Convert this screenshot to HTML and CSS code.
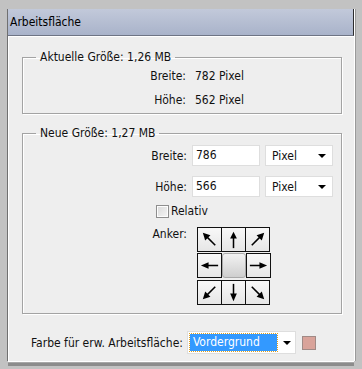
FILE: index.html
```html
<!DOCTYPE html>
<html lang="de">
<head>
<meta charset="utf-8">
<title>Arbeitsfläche</title>
<link rel="stylesheet" href="styles.css">
</head>
<body>
<div class="window">
  <div class="titlebar">Arbeitsfläche</div>
  <div class="content">
    <fieldset class="group group-current">
      <legend>Aktuelle Größe: 1,26 MB</legend>
      <div class="info-row"><span class="lbl">Breite:</span><span class="val">782 Pixel</span></div>
      <div class="info-row"><span class="lbl">Höhe:</span><span class="val">562 Pixel</span></div>
    </fieldset>

    <fieldset class="group group-new">
      <legend>Neue Größe: 1,27 MB</legend>
      <div class="field-row">
        <span class="lbl">Breite:</span>
        <span class="input">786</span>
        <span class="select"><span class="sel-text">Pixel</span><span class="tri"></span></span>
      </div>
      <div class="field-row">
        <span class="lbl">Höhe:</span>
        <span class="input">566</span>
        <span class="select"><span class="sel-text">Pixel</span><span class="tri"></span></span>
      </div>
      <div class="check-row">
        <span class="checkbox"></span><span class="check-label">Relativ</span>
      </div>
      <div class="anchor-row">
        <span class="lbl anchor-lbl">Anker:</span>
        <div class="anchor">
          <div class="arow">
            <span class="cell"><svg viewBox="0 0 24 24" width="24" height="24"><path d="M18 18 L9 9" stroke="#000" stroke-width="1.6"/><path d="M5 5 L13 7.5 L7.5 13 Z" fill="#000"/></svg></span>
            <span class="cell"><svg viewBox="0 0 24 24" width="24" height="24"><path d="M12 21 L12 9" stroke="#000" stroke-width="1.6"/><path d="M12 4 L15.5 11 L8.5 11 Z" fill="#000"/></svg></span>
            <span class="cell"><svg viewBox="0 0 24 24" width="24" height="24"><path d="M6 18 L15 9" stroke="#000" stroke-width="1.6"/><path d="M19 5 L16.5 13 L11 7.5 Z" fill="#000"/></svg></span>
          </div>
          <div class="arow arow-mid">
            <span class="cell"><svg viewBox="0 0 24 24" width="24" height="24"><path d="M21 12 L9 12" stroke="#000" stroke-width="1.6"/><path d="M3 12 L11 8.5 L11 15.5 Z" fill="#000"/></svg></span>
            <span class="cell center"></span>
            <span class="cell"><svg viewBox="0 0 24 24" width="24" height="24"><path d="M3 12 L15 12" stroke="#000" stroke-width="1.6"/><path d="M21 12 L13 8.5 L13 15.5 Z" fill="#000"/></svg></span>
          </div>
          <div class="arow arow-bot">
            <span class="cell"><svg viewBox="0 0 24 24" width="24" height="24"><path d="M18 6 L9 15" stroke="#000" stroke-width="1.6"/><path d="M5 19 L7.5 11 L13 16.5 Z" fill="#000"/></svg></span>
            <span class="cell"><svg viewBox="0 0 24 24" width="24" height="24"><path d="M12 3 L12 15" stroke="#000" stroke-width="1.6"/><path d="M12 21 L15.5 13 L8.5 13 Z" fill="#000"/></svg></span>
            <span class="cell"><svg viewBox="0 0 24 24" width="24" height="24"><path d="M6 6 L15 15" stroke="#000" stroke-width="1.6"/><path d="M19 19 L11 16.5 L16.5 11 Z" fill="#000"/></svg></span>
          </div>
        </div>
      </div>
    </fieldset>

    <div class="bottom-row">
      <span class="bottom-lbl">Farbe für erw. Arbeitsfläche:</span>
      <span class="select select-wide"><span class="sel-focus">Vordergrund</span><span class="tri"></span></span>
      <span class="swatch"></span>
    </div>
  </div>
</div>
</body>
</html>
```

FILE: styles.css
```css
html, body {
  margin: 0;
  padding: 0;
}
body {
  width: 362px;
  height: 369px;
  background: #c2c2c2;
  font-family: "DejaVu Sans Condensed", "DejaVu Sans", sans-serif;
  font-size: 12px;
  color: #111;
  overflow: hidden;
  padding-top: 9px;
  padding-left: 8px;
  box-sizing: border-box;
}
.window {
  width: 346px;
  height: 352px;
  background: #eeeeee;
  box-shadow: -1px 0 0 #707070, 1px 0 0 #ffffff, 2px 0 0 #9a9a9a, 0 1px 0 #ffffff, 0 2px 0 #a8a8a8, 0 5px 0 #8c8c8c;
  display: flex;
  flex-direction: column;
}
.titlebar {
  height: 27px;
  box-sizing: border-box;
  background: linear-gradient(#c2c9da, #a9b3ca);
  border-bottom: 1px solid #6e7484;
  border-right: 1px solid #2c2c2c;
  padding-left: 2px;
  line-height: 27px;
  color: #000;
}
.content {
  flex: 1;
  padding: 13px 12px 0 13px;
  border-top: 1px solid #ffffff;
  border-left: 1px solid #ffffff;
  display: flex;
  flex-direction: column;
}
.group {
  margin: 0;
  padding: 0;
  border: 1px solid #a3a3a3;
  box-shadow: inset 1px 1px 0 #ffffff, 1px 1px 0 #ffffff;
  min-width: 0;
}
.group legend {
  margin-left: 13px;
  padding: 0 4px;
  line-height: 14px;
}
.group-current {
  height: 64px;
  box-sizing: border-box;
  padding-top: 0;
}
.info-row {
  display: flex;
  height: 24px;
  align-items: center;
}
.lbl {
  width: 163px;
  text-align: right;
  flex: none;
}
.val {
  margin-left: 9px;
}
.group-new {
  margin-top: 12px;
  padding-top: 5px;
  padding-bottom: 8px;
}
.field-row {
  display: flex;
  align-items: center;
  height: 21px;
  margin-bottom: 10px;
}
.field-row .lbl {
  width: 164px;
}
.input {
  margin-left: 5px;
  width: 68px;
  height: 21px;
  box-sizing: border-box;
  background: #fff;
  border: 1px solid #dedede;
  padding-left: 3px;
  line-height: 19px;
}
.select {
  margin-left: 5px;
  width: 68px;
  height: 21px;
  box-sizing: border-box;
  background: #fff;
  border: 1px solid #dedede;
  display: flex;
  align-items: center;
  justify-content: space-between;
  padding: 0 6px 0 6px;
}
.sel-text {
  line-height: 19px;
  padding-top: 2px;
}
.tri {
  width: 0;
  height: 0;
  border-left: 4px solid transparent;
  border-right: 4px solid transparent;
  border-top: 4px solid #000;
}
.check-row {
  display: flex;
  align-items: center;
  height: 14px;
  margin-top: -3px;
  padding-left: 133px;
}
.checkbox {
  width: 13px;
  height: 13px;
  box-sizing: border-box;
  border: 1px solid #8e8e8e;
  background: linear-gradient(135deg, #d9d9d9, #f6f6f6);
  box-shadow: inset 0 0 0 1px #fdfdfd;
}
.check-label {
  margin-left: 2px;
}
.anchor-row {
  display: flex;
  margin-top: 9px;
}
.anchor-lbl {
  width: 164px;
  padding-top: 0;
  line-height: 14px;
}
.anchor {
  margin-left: 10px;
  display: flex;
  flex-direction: column;
  gap: 1px;
}
.arow {
  display: flex;
}
.arow-bot {
  margin-top: 1px;
}
.cell {
  width: 25px;
  height: 25px;
  box-sizing: border-box;
  border: 1px solid #111;
  background: linear-gradient(#f8f8f8, #e6e6e6);
  display: flex;
  align-items: center;
  justify-content: center;
}
.cell + .cell {
  margin-left: -1px;
}
.cell svg {
  display: block;
  width: 23px;
  height: 23px;
}
.cell.center {
  border: 1px solid #a9a9a9;
  border-radius: 3px;
  background: linear-gradient(#f2f2f2, #cfcfcf);
  width: 24px;
  margin-left: 0;
  margin-right: 0;
}
.cell.center + .cell {
  margin-left: 0;
}
.bottom-row {
  display: flex;
  align-items: center;
  margin-top: 17px;
  height: 23px;
}
.bottom-lbl {
  margin-left: 9px;
}
.select-wide {
  margin-left: 4px;
  width: 109px;
  height: 23px;
  padding: 0 4px 0 2px;
}
.sel-focus {
  width: 87px;
  height: 17px;
  box-sizing: border-box;
  background: #3399ff;
  color: #fff;
  outline: 1px dotted #e0a020;
  padding-left: 3px;
  line-height: 16px;
}
.swatch {
  margin-left: 6px;
  width: 14px;
  height: 14px;
  box-sizing: border-box;
  background: #d9a39a;
  border: 1px solid #a08a86;
}
```
